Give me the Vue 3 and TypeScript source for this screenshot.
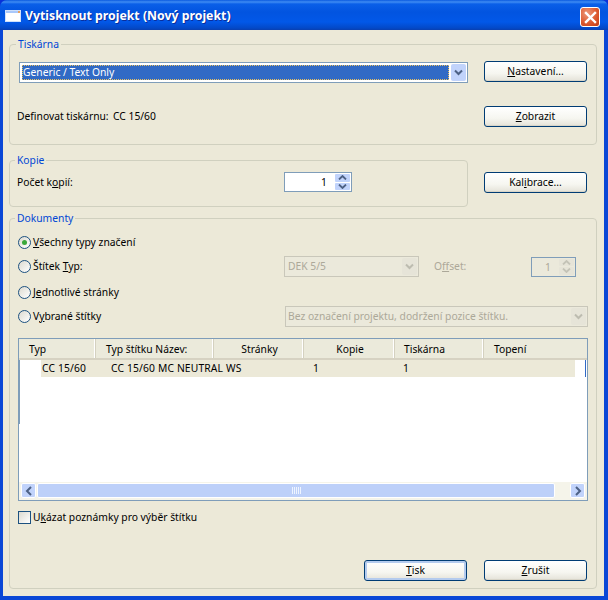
<script setup lang="ts">
interface Col { label: string; width: number }
const cols: Col[] = [
  { label: 'Typ', width: 77 },
  { label: 'Typ štítku Název:', width: 118 },
  { label: 'Stránky', width: 90 },
  { label: 'Kopie', width: 91 },
  { label: 'Tiskárna', width: 89 },
  { label: 'Topení', width: 101 }
]
</script>

<template>
  <div class="window">
    <header class="titlebar">
      <svg class="appicon" width="16" height="12" viewBox="0 0 16 12">
        <rect x="0.5" y="0.5" width="15" height="11" fill="#fff" stroke="#cfe0fb" />
        <rect x="1" y="1" width="14" height="2" fill="#a9c8fb" />
        <rect x="13" y="1" width="2" height="2" fill="#e8a060" />
      </svg>
      <span class="title">Vytisknout projekt (Nový projekt)</span>
      <button class="close" aria-label="Zavřít">
        <svg width="13" height="13" viewBox="0 0 13 13">
          <path d="M2 2 L11 11 M11 2 L2 11" stroke="#fff" stroke-width="2.4" stroke-linecap="square" />
        </svg>
      </button>
    </header>

    <main class="client">
      <fieldset class="group printer">
        <legend>Tiskárna</legend>
        <div class="row-a">
          <div class="combo main-combo">
            <span class="combo-value"><span class="sel">Generic / Text Only</span></span>
            <span class="drop"><svg width="9" height="7" viewBox="0 0 9 7"><path d="M1 1.5 L4.5 5 L8 1.5" fill="none" stroke="#4d6185" stroke-width="2" /></svg></span>
          </div>
          <button class="btn"><u>N</u>astavení...</button>
        </div>
        <div class="row-b">
          <span class="deflabel">Definovat tiskárnu:</span>
          <span class="defvalue">CC 15/60</span>
          <button class="btn push"><u>Z</u>obrazit</button>
        </div>
      </fieldset>

      <div class="copies-line">
        <fieldset class="group copies">
          <legend>Kopie</legend>
          <span class="copylabel">Počet k<u>o</u>pií:</span>
          <div class="spin">
            <span class="spin-val">1</span>
            <span class="arrows">
              <span class="arr"><svg width="9" height="5" viewBox="0 0 9 5"><path d="M1 4.5 L4.5 1 L8 4.5" fill="none" stroke="#4d6185" stroke-width="1.8" /></svg></span>
              <span class="arr"><svg width="9" height="5" viewBox="0 0 9 5"><path d="M1 .5 L4.5 4 L8 .5" fill="none" stroke="#4d6185" stroke-width="1.8" /></svg></span>
            </span>
          </div>
        </fieldset>
        <button class="btn">Kal<u>i</u>brace...</button>
      </div>

      <fieldset class="group docs">
        <legend>Dokumenty</legend>
        <div class="radio-row r1">
          <span class="radio on"><i></i></span>
          <span class="radio-text"><u>V</u>šechny typy značení</span>
        </div>
        <div class="radio-row r2">
          <span class="radio"></span>
          <span class="radio-text wide">Štítek <u>T</u>yp:</span>
          <div class="combo off dek">
            <span class="combo-value">DEK 5/5</span>
            <span class="drop"><svg width="9" height="7" viewBox="0 0 9 7"><path d="M1 1.5 L4.5 5 L8 1.5" fill="none" stroke="#bdbcb0" stroke-width="2" /></svg></span>
          </div>
          <span class="offset">O<u>f</u>fset:</span>
          <div class="spin spin-off">
            <span class="spin-val">1</span>
            <span class="arrows">
              <span class="arr"><svg width="9" height="5" viewBox="0 0 9 5"><path d="M1 4.5 L4.5 1 L8 4.5" fill="none" stroke="#c4c3b7" stroke-width="1.8" /></svg></span>
              <span class="arr"><svg width="9" height="5" viewBox="0 0 9 5"><path d="M1 .5 L4.5 4 L8 .5" fill="none" stroke="#c4c3b7" stroke-width="1.8" /></svg></span>
            </span>
          </div>
        </div>
        <div class="radio-row r3">
          <span class="radio"></span>
          <span class="radio-text">J<u>e</u>dnotlivé stránky</span>
        </div>
        <div class="radio-row r4">
          <span class="radio"></span>
          <span class="radio-text wide2">V<u>y</u>brané štítky</span>
          <div class="combo off long">
            <span class="combo-value">Bez označení projektu, dodržení pozice štítku.</span>
            <span class="drop"><svg width="9" height="7" viewBox="0 0 9 7"><path d="M1 1.5 L4.5 5 L8 1.5" fill="none" stroke="#bdbcb0" stroke-width="2" /></svg></span>
          </div>
        </div>

        <div class="list">
          <div class="list-head">
            <span v-for="c in cols" :key="c.label" class="hcell" :style="{ width: c.width + 'px' }">{{ c.label }}</span>
          </div>
          <div class="list-body">
            <span class="edge-left"></span>
            <span class="edge-right"></span>
            <div class="list-row">
              <span class="c1">CC 15/60</span>
              <span class="c2">CC 15/60 MC NEUTRAL WS</span>
              <span class="c3">1</span>
              <span class="c4">1</span>
            </div>
          </div>
          <div class="hscroll">
            <span class="sbtn"><svg width="8" height="10" viewBox="0 0 8 10"><path d="M6 1 L2 5 L6 9" fill="none" stroke="#4d6185" stroke-width="2" /></svg></span>
            <span class="thumb">
              <svg width="9" height="7" viewBox="0 0 9 7"><path d="M.5 0V7M2.5 0V7M4.5 0V7M6.5 0V7M8.5 0V7" stroke="#eef4ff" /></svg>
            </span>
            <span class="sbtn"><svg width="8" height="10" viewBox="0 0 8 10"><path d="M2 1 L6 5 L2 9" fill="none" stroke="#4d6185" stroke-width="2" /></svg></span>
          </div>
        </div>

        <div class="check-row">
          <span class="check"></span>
          <span>U<u>k</u>ázat poznámky pro výběr štítku</span>
        </div>

        <div class="actions">
          <button class="btn default"><u>T</u>isk</button>
          <button class="btn"><u>Z</u>rušit</button>
        </div>
      </fieldset>
    </main>
  </div>
</template>

<style>
html, body { margin: 0; background: #0831d9; }
</style>

<style scoped>
.window {
  width: 608px;
  height: 600px;
  box-sizing: border-box;
  display: flex;
  flex-direction: column;
  background: #0a47d6;
  font-family: "Noto Sans", "Liberation Sans", Arial, sans-serif;
  font-size: 10.3px;
  line-height: 13px;
  color: #000;
  border-radius: 7px 7px 0 0;
  overflow: hidden;
}
u { text-underline-offset: 1px; }
.titlebar {
  height: 30px;
  flex: none;
  display: flex;
  align-items: center;
  padding: 0 8px 0 5px;
  box-sizing: border-box;
  background: linear-gradient(180deg, #0a5ae0 0, #3f8cf3 2px, #0a5fe8 4px, #0254e0 12px, #0258e8 22px, #0349c8 28px, #0a3fb0 30px);
}
.appicon { margin-top: 2px; }
.title {
  margin-left: 4px;
  margin-top: 1px;
  color: #fff;
  font-family: "Noto Sans", sans-serif;
  font-weight: 700;
  font-size: 12.3px;
  text-shadow: 1px 1px 0 #0a2e9c;
  flex: 1;
}
.close {
  width: 20px;
  height: 20px;
  padding: 0;
  margin-top: 4px;
  display: flex;
  align-items: center;
  justify-content: center;
  border: 1px solid #fff;
  border-radius: 3px;
  background: radial-gradient(circle at 35% 30%, #ec9a7c, #dd5a30 55%, #c23a10);
}
.client {
  flex: 1;
  margin: 0 4px 4px 3px;
  padding: 8px 7px 7px 6px;
  background: #ece9d8;
  display: flex;
  flex-direction: column;
  min-height: 0;
}
.group {
  margin: 0;
  padding: 0;
  border: 1px solid #d0d0bf;
  border-radius: 4px;
  box-sizing: border-box;
  min-width: 0;
  position: relative;
}
legend {
  color: #0046d5;
  padding: 0 2px;
  line-height: 13px;
}
.printer legend { margin-left: -3px; }
.copies legend { margin-left: -2px; }
.docs legend { margin-left: -3px; }
.printer { height: 107px; padding: 10px 9px 0 9px; }
.row-a { display: flex; justify-content: space-between; align-items: flex-start; }
.row-b { display: flex; align-items: center; margin-top: 23px; margin-left: -2px; }
.deflabel { width: 96px; white-space: nowrap; flex: none; }
.push { margin-left: auto; }
.btn {
  width: 103px;
  height: 21px;
  box-sizing: border-box;
  padding: 0;
  border: 1px solid #003c74;
  border-radius: 3px;
  background: linear-gradient(180deg, #fff 0, #f6f6f0 60%, #e4e2d8 100%);
  font: inherit;
  color: #000;
  flex: none;
  box-shadow: inset 0 -1px 0 #d8d5c8;
}
.default { box-shadow: inset 0 0 0 2px #b4cbee; }
.combo {
  display: flex;
  box-sizing: border-box;
  height: 21px;
  border: 1px solid #7f9db9;
  background: #fff;
  align-items: stretch;
}
.main-combo { width: 449px; margin-top: 1px; }
.combo-value { flex: 1; min-width: 0; display: flex; align-items: center; padding: 1px 1px 1px 3px; white-space: nowrap; overflow: hidden; }
.main-combo .combo-value { padding: 2px 1px 2px 2px; }
.sel {
  flex: 1;
  align-self: stretch;
  display: flex;
  align-items: center;
  padding-left: 1px;
  background: #316ac5;
  color: #fff;
  outline: 1px dotted #e8c060;
  outline-offset: -1px;
}
.drop {
  width: 15px;
  margin: 1px;
  flex: none;
  display: flex;
  align-items: center;
  justify-content: center;
  background: #c1d3fb;
  border-radius: 2px;
}
.off { background: #ebe9db; border-color: #c9c7ba; color: #aca899; }
.off .drop { background: #e6e4d8; }
.copies-line { display: flex; justify-content: space-between; align-items: flex-start; margin: 9px 0 0; }
.copies-line > .btn { margin-top: 18px; margin-right: 10px; }
.copies {
  width: 459px;
  height: 53px;
  display: flex;
  align-items: center;
  justify-content: space-between;
  padding: 0 115px 9px 7px;
}
.spin {
  display: flex;
  box-sizing: border-box;
  width: 68px;
  height: 20px;
  border: 1px solid #7f9db9;
  background: #fff;
}
.spin-val { flex: 1; text-align: right; padding-right: 8px; line-height: 18px; }
.arrows { width: 15px; display: flex; flex-direction: column; gap: 1px; padding: 1px 1px 1px 0; }
.arr { flex: 1; display: flex; align-items: center; justify-content: center; background: #c1d3fb; border-radius: 1px; }
.spin-off { width: 45px; background: #ebe9db; color: #aca899; }
.spin-off .arr { background: #e6e4d8; }
.docs {
  flex: 1;
  margin-top: 5px;
  padding: 0 8px 7px 8px;
  display: flex;
  flex-direction: column;
  min-height: 0;
}
.radio-row { display: flex; align-items: center; height: 21px; }
.r1 { margin-top: 7px; }
.r2 { margin-top: 3px; }
.r3 { margin-top: 5px; }
.r4 { margin-top: 3px; }
.radio {
  width: 13px;
  height: 13px;
  box-sizing: border-box;
  border: 1px solid #1c5180;
  border-radius: 50%;
  background: linear-gradient(135deg, #dcdad0, #fff);
  display: flex;
  align-items: center;
  justify-content: center;
  flex: none;
}
.radio i { width: 5px; height: 5px; border-radius: 50%; background: #3aa83a; }
.radio-text { margin-left: 2px; }
.wide { width: 251px; flex: none; }
.wide2 { width: 252px; flex: none; }
.dek { width: 135px; }
.offset { color: #aca899; margin-left: 15px; width: 97px; flex: none; }
.long { width: 305px; }
.long .combo-value { padding-left: 2px; }
.list {
  margin-top: 11px;
  height: 163px;
  box-sizing: border-box;
  border: 1px solid #7f9db9;
  background: #fff;
  display: flex;
  flex-direction: column;
  width: 570px;
  flex: none;
}
.list-head {
  display: flex;
  height: 21px;
  flex: none;
  box-sizing: border-box;
  background: #ebeadb;
  border-bottom: 2px solid #d6d2c2;
}
.hcell {
  box-sizing: border-box;
  padding-left: 10px;
  line-height: 20px;
  border-right: 1px solid #d4d1c0;
  box-shadow: inset -1px 0 0 #fff;
  flex: none;
  white-space: nowrap;
}
.hcell:nth-child(3), .hcell:nth-child(4) { text-align: center; padding-left: 2px; }
.hcell:nth-child(5) { padding-left: 9px; }
.hcell:last-child { border-right: none; box-shadow: none; }
.list-body { flex: 1; min-height: 0; padding: 0 0 0 22px; position: relative; }
.edge-left { position: absolute; left: 0; top: 0; width: 1px; height: 64px; background: #7f9db9; }
.edge-right { position: absolute; left: 566px; top: 0; width: 1px; height: 17px; background: #316ac5; }
.list-row {
  width: 534px;
  height: 17px;
  background: #ece9d8;
  display: flex;
  align-items: center;
}
.c1 { width: 70px; padding-left: 1px; box-sizing: border-box; flex: none; letter-spacing: .15px; }
.c2 { width: 202px; flex: none; letter-spacing: .15px; }
.c3 { width: 90px; flex: none; }
.hscroll {
  height: 17px;
  flex: none;
  display: flex;
  align-items: center;
  padding: 0 2px 1px;
  background: #f5f4ea;
}
.sbtn {
  width: 15px;
  height: 15px;
  flex: none;
  display: flex;
  align-items: center;
  justify-content: center;
  background: #c1d3fb;
  border: 1px solid #fff;
  box-sizing: border-box;
  border-radius: 2px;
}
.thumb {
  width: 518px;
  height: 15px;
  margin: 0 15px 0 1px;
  box-sizing: border-box;
  border: 1px solid #fff;
  border-radius: 2px;
  background: #bdd0f9;
  display: flex;
  align-items: center;
  justify-content: center;
}
.check-row { display: flex; align-items: center; margin-top: 9px; gap: 2px; height: 14px; }
.check {
  width: 13px;
  height: 13px;
  box-sizing: border-box;
  border: 1px solid #1c5180;
  background: linear-gradient(135deg, #dcdad0, #fff);
  flex: none;
}
.actions { display: flex; justify-content: flex-end; gap: 17px; margin-top: auto; margin-right: 1px; }
</style>
